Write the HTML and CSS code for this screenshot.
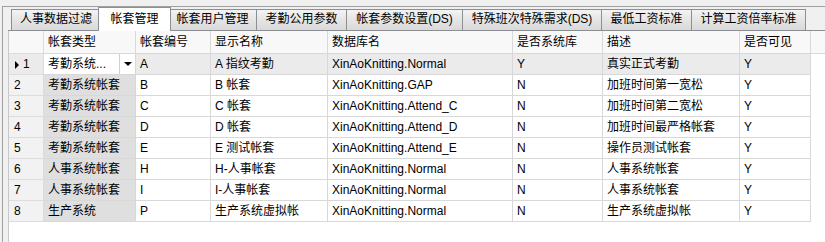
FILE: index.html
```html
<!DOCTYPE html>
<html lang="zh">
<head>
  <meta charset="UTF-8">
  <title>帐套管理</title>
  <link rel="stylesheet" href="styles.css">
</head>
<body>
  <div class="frame">
    <div class="tabs">
      <div class="tab">人事数据过滤</div>
      <div class="tab active">帐套管理</div>
      <div class="tab">帐套用户管理</div>
      <div class="tab">考勤公用参数</div>
      <div class="tab">帐套参数设置(DS)</div>
      <div class="tab">特殊班次特殊需求(DS)</div>
      <div class="tab">最低工资标准</div>
      <div class="tab">计算工资倍率标准</div>
    </div>
    <div class="page">
      <div class="grid">
        <div class="row head">
          <div class="cell rh"></div>
          <div class="cell">帐套类型</div>
          <div class="cell">帐套编号</div>
          <div class="cell">显示名称</div>
          <div class="cell">数据库名</div>
          <div class="cell">是否系统库</div>
          <div class="cell">描述</div>
          <div class="cell">是否可见</div>
          <div class="cell fill"></div>
        </div>

        <div class="row current">
          <div class="cell rh"><span class="arrow"></span>1</div>
          <div class="cell edit">
            <span class="edit-text">考勤系统...</span>
            <span class="drop"><span class="caret"></span></span>
          </div>
          <div class="cell">A</div>
          <div class="cell">A 指纹考勤</div>
          <div class="cell">XinAoKnitting.Normal</div>
          <div class="cell">Y</div>
          <div class="cell">真实正式考勤</div>
          <div class="cell">Y</div>
        </div>

        <div class="row">
          <div class="cell rh">2</div>
          <div class="cell type">考勤系统帐套</div>
          <div class="cell">B</div>
          <div class="cell">B 帐套</div>
          <div class="cell">XinAoKnitting.GAP</div>
          <div class="cell">N</div>
          <div class="cell">加班时间第一宽松</div>
          <div class="cell">Y</div>
        </div>

        <div class="row">
          <div class="cell rh">3</div>
          <div class="cell type">考勤系统帐套</div>
          <div class="cell">C</div>
          <div class="cell">C 帐套</div>
          <div class="cell">XinAoKnitting.Attend_C</div>
          <div class="cell">N</div>
          <div class="cell">加班时间第二宽松</div>
          <div class="cell">Y</div>
        </div>

        <div class="row">
          <div class="cell rh">4</div>
          <div class="cell type">考勤系统帐套</div>
          <div class="cell">D</div>
          <div class="cell">D 帐套</div>
          <div class="cell">XinAoKnitting.Attend_D</div>
          <div class="cell">N</div>
          <div class="cell">加班时间最严格帐套</div>
          <div class="cell">Y</div>
        </div>

        <div class="row">
          <div class="cell rh">5</div>
          <div class="cell type">考勤系统帐套</div>
          <div class="cell">E</div>
          <div class="cell">E 测试帐套</div>
          <div class="cell">XinAoKnitting.Attend_E</div>
          <div class="cell">N</div>
          <div class="cell">操作员测试帐套</div>
          <div class="cell">Y</div>
        </div>

        <div class="row">
          <div class="cell rh">6</div>
          <div class="cell type">人事系统帐套</div>
          <div class="cell">H</div>
          <div class="cell">H-人事帐套</div>
          <div class="cell">XinAoKnitting.Normal</div>
          <div class="cell">N</div>
          <div class="cell">人事系统帐套</div>
          <div class="cell">Y</div>
        </div>

        <div class="row">
          <div class="cell rh">7</div>
          <div class="cell type">人事系统帐套</div>
          <div class="cell">I</div>
          <div class="cell">I-人事帐套</div>
          <div class="cell">XinAoKnitting.Normal</div>
          <div class="cell">N</div>
          <div class="cell">人事系统帐套</div>
          <div class="cell">Y</div>
        </div>

        <div class="row">
          <div class="cell rh">8</div>
          <div class="cell type">生产系统</div>
          <div class="cell">P</div>
          <div class="cell">生产系统虚拟帐</div>
          <div class="cell">XinAoKnitting.Normal</div>
          <div class="cell">N</div>
          <div class="cell">生产系统虚拟帐</div>
          <div class="cell">Y</div>
        </div>
      </div>
    </div>
  </div>
</body>
</html>
```

FILE: styles.css
```css
* {
  margin: 0;
  padding: 0;
  box-sizing: border-box;
}

html, body {
  width: 825px;
  height: 242px;
  overflow: hidden;
}

body {
  font-family: "Liberation Sans", "Noto Sans CJK SC", sans-serif;
  font-size: 12px;
  color: #000;
  background-color: #f0f0f0;
}

.frame {
  margin: 6px 0 0 2px;
  height: 236px;
  border-top: 1px solid #a0a0a0;
  border-left: 1px solid #a0a0a0;
  padding-left: 5px;
  display: flex;
  flex-direction: column;
}

/* tab strip */
.tabs {
  display: flex;
  align-items: flex-end;
  height: 24px;
  padding-left: 3px;
  border-bottom: 1px solid #8c8e94;
}

.tab {
  height: 21px;
  line-height: 19px;
  font-size: 12px;
  text-align: center;
  white-space: nowrap;
  border: 1px solid #8c8e94;
  border-bottom: none;
  margin-right: -1px;
  background: linear-gradient(#f3f3f3, #e5e5e5 50%, #d9d9d9);
}

.tab:nth-child(1) { width: 90px; }
.tab:nth-child(3) { width: 89px; }
.tab:nth-child(4) { width: 91px; }
.tab:nth-child(5) { width: 117px; }
.tab:nth-child(6) { width: 140px; }
.tab:nth-child(7) { width: 91px; }
.tab:nth-child(8) { width: 115px; }

.tab.active {
  position: relative;
  width: 73px;
  height: 24px;
  margin: 0 -3px -1px -2px;
  line-height: 22px;
  background: #fff;
}

/* grid */
.page {
  flex: 1;
  background-color: #fff;
  border-left: 1px solid #c8c8c8;
}

.row {
  display: grid;
  grid-template-columns: 35px 92px 75px 117px 185px 90px 137px 71px 1fr;
  height: 21px;
}

.cell {
  border-right: 1px solid #d8d8d8;
  border-bottom: 1px solid #d8d8d8;
  padding: 0 4px;
  line-height: 20px;
  white-space: nowrap;
  overflow: hidden;
}

.row.head {
  height: 23px;
  background-color: #f8f8f8;
}

.row.head .cell {
  line-height: 22px;
}

.cell.fill {
  border-right: none;
}

.cell.rh {
  background-color: #f2f2f2;
  border-color: #dcdcdc;
  padding-left: 5px;
}

.row.head .cell.rh {
  background-color: #f8f8f8;
}

.cell.type {
  background-color: #dfdfdf;
}

.row.current .cell {
  background-color: #ebebeb;
}

.row.current .cell.rh {
  padding-left: 6px;
}

.arrow {
  display: inline-block;
  width: 0;
  height: 0;
  border-top: 4px solid transparent;
  border-bottom: 4px solid transparent;
  border-left: 4px solid #000;
  margin-right: 4px;
  vertical-align: -1px;
}

.row.current .cell.edit {
  background-color: #fff;
  display: flex;
  padding-right: 0;
}

.edit-text {
  flex: 1;
  overflow: hidden;
}

.drop {
  width: 16px;
  height: 20px;
  border-left: 1px solid #d0d0d0;
  display: flex;
  align-items: center;
  justify-content: center;
}

.caret {
  width: 0;
  height: 0;
  border-left: 4px solid transparent;
  border-right: 4px solid transparent;
  border-top: 4px solid #000;
}
```
